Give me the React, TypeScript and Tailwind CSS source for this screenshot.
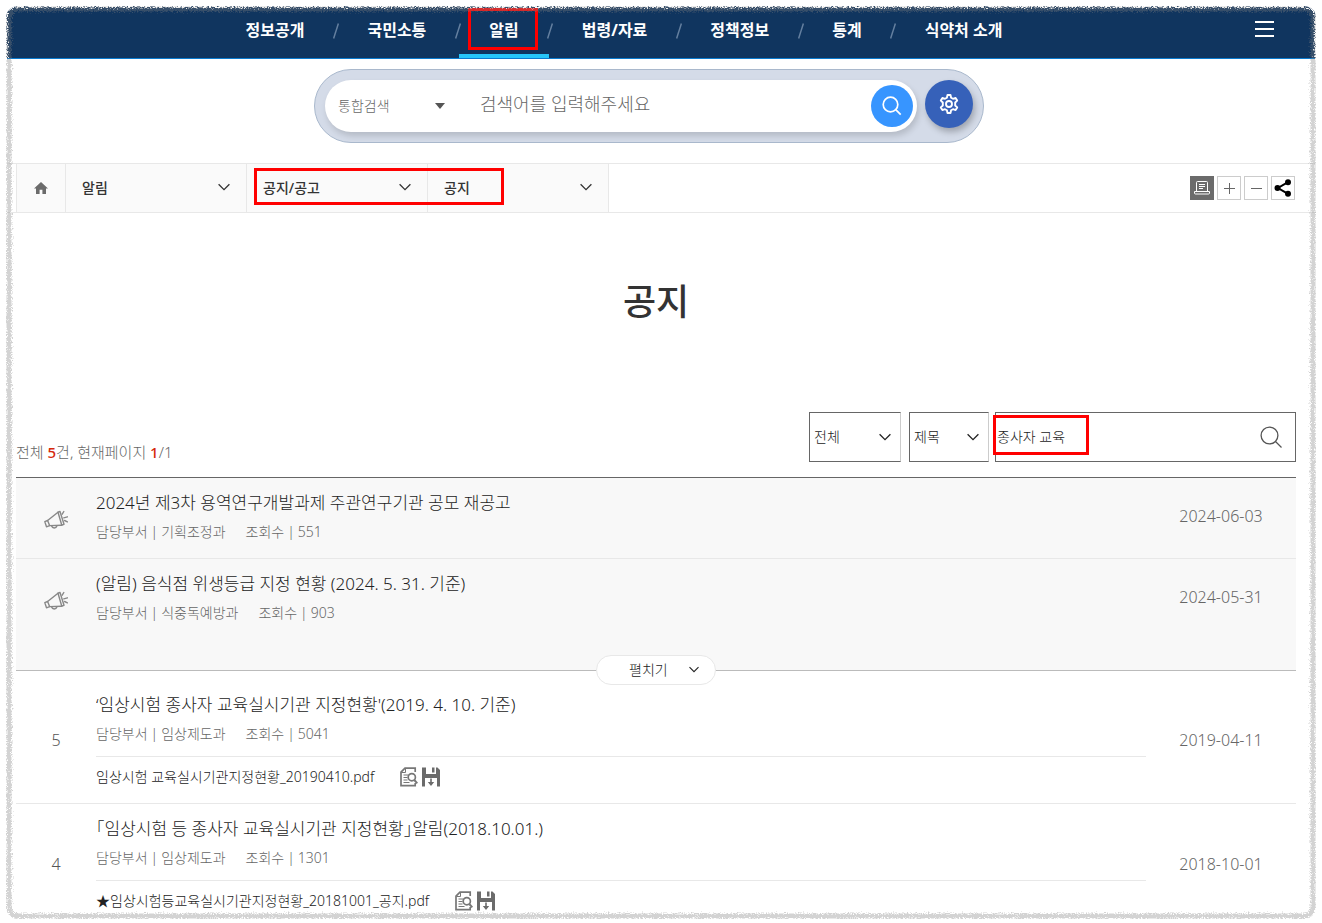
import { useState } from 'react';

interface INotice {
    no?: number;
    title: string;
    dept: string;
    views: number;
    date: string;
    file?: string;
}

const menus = ['정보공개', '국민소통', '알림', '법령/자료', '정책정보', '통계', '식약처 소개'];

const pinned: INotice[] = [
    { title: '2024년 제3차 용역연구개발과제 주관연구기관 공모 재공고', dept: '기획조정과', views: 551, date: '2024-06-03' },
    { title: '(알림) 음식점 위생등급 지정 현황 (2024. 5. 31. 기준)', dept: '식중독예방과', views: 903, date: '2024-05-31' },
];

const notices: INotice[] = [
    { no: 5, title: "‘임상시험 종사자 교육실시기관 지정현황'(2019. 4. 10. 기준)", dept: '임상제도과', views: 5041, date: '2019-04-11', file: '임상시험 교육실시기관지정현황_20190410.pdf' },
    { no: 4, title: '「임상시험 등 종사자 교육실시기관 지정현황」알림(2018.10.01.)', dept: '임상제도과', views: 1301, date: '2018-10-01', file: '★임상시험등교육실시기관지정현황_20181001_공지.pdf' },
];

const Chevron = ({ className }: { className: string }) => (
    <svg viewBox="0 0 12 8" className={className} fill="none" stroke="currentColor" strokeWidth="1.3" aria-hidden="true">
        <path d="M.6 1.2 6 6.6l5.400-5.400" />
    </svg>
);

const Megaphone = () => (
    <svg viewBox="0 0 24 20" className="w-6 h-5 text-[#888]" fill="none" stroke="currentColor" strokeWidth="1.4" strokeLinejoin="round" strokeLinecap="round" aria-hidden="true">
        <path d="M.8 11.600 3.600 10.500 5.600 15.600 2.500 16.800Z" />
        <path d="M3.600 10.500 14 2.200M5.600 15.600 17.800 15.200" />
        <path d="M14 2.200 16 1.500 20 14.300 17.800 15.200Z" />
        <path d="M7.500 15.800c1 3 4.500 3 5.500 0" />
        <path d="M18.200 4.200 19.800 1.500M19.800 7.800 23.400 6.800M20.600 10.500 23.400 11.800" />
    </svg>
);

const PreviewIcon = () => (
    <svg viewBox="0 0 18 20" className="w-[18px] h-5" fill="none" stroke="#777" strokeWidth="1.700" aria-hidden="true">
        <path d="M15.200 5V1.200H5L1 5.200V18.600H15.200V16" />
        <path d="M5.500 1.500V5.500H1.500" strokeWidth="1" />
        <path d="M3.500 8h5M3.500 10.500h4M3.500 13h4M3.500 15.500h6" strokeWidth="1.200" />
        <circle cx="11.800" cy="10.200" r="3.600" />
        <path d="M14.300 13 17.300 16.400" strokeWidth="2" />
    </svg>
);

const SaveIcon = () => (
    <svg viewBox="0 0 18 20" className="w-[18px] h-5" aria-hidden="true">
        <path fill="#6b6b6b" d="M0 .5H4V7H14V.5H15.500L18 3V19.500H15V11H3V19.500H0Z" />
        <path fill="#6b6b6b" d="M10 .5H12.500V5.500H10ZM8.200 11.500H9.800V15H12.200L9 19 5.800 15H8.200Z" />
    </svg>
);

const NoticeRow = ({ item }: { item: INotice }) => (
    <li className="flex items-stretch border-b border-[#e8e8e8] last:border-b-0">
        <div className="w-20 shrink-0 flex items-center justify-center text-[#555]">
            {item.no ? <span className="pb-1">{item.no}</span> : <span className="pt-1"><Megaphone /></span>}
        </div>
        <div className="grow min-w-0 pt-3">
            <a href="#" className="block text-[17px] leading-[26px] text-[#222] truncate [font-feature-settings:'halt']">{item.title}</a>
            <div className="mt-[5px] text-[14px] leading-[22px] text-[#666] flex gap-5">
                <p className="flex gap-[3px]"><span>담당부서</span><span>|</span><span>{item.dept}</span></p>
                <p className="flex gap-[3px]"><span>조회수</span><span>|</span><span>{item.views}</span></p>
            </div>
            {item.file ?
                <div className="mt-[11px] pt-2 pb-[14px] border-t border-[#e8e8e8] flex items-center">
                    <a href="#" className="text-[14px] leading-6 text-[#222]">{item.file}</a>
                    <button type="button" aria-label="미리보기" className="ml-[26px]"><PreviewIcon /></button>
                    <button type="button" aria-label="내려받기" className="ml-1"><SaveIcon /></button>
                </div>
                : <div className="h-[15px]"></div>
            }
        </div>
        <div className="w-[150px] pb-1 shrink-0 flex items-center justify-center text-[#666]">{item.date}</div>
    </li>
);

// rough grey outline drawn around the whole page
const RoughFrame = () => (
    <svg className="absolute inset-0 w-full h-full pointer-events-none" aria-hidden="true">
        <filter id="rough" x="-2%" y="-2%" width="104%" height="104%" colorInterpolationFilters="sRGB">
            <feTurbulence type="fractalNoise" baseFrequency="0.8" numOctaves="2" seed="4" />
            <feDisplacementMap in="SourceGraphic" scale="7" xChannelSelector="R" yChannelSelector="G" />
        </filter>
        <g filter="url(#rough)" fill="none">
            <rect x="0" y="0" rx="10" className="w-full h-full" stroke="#fff" strokeWidth="3" />
            <rect x="3" y="3" rx="9" className="w-[calc(100%-6px)] h-[calc(100%-6px)]" stroke="#808080" strokeOpacity="0.350" strokeWidth="5" />
        </g>
    </svg>
);

const App = () => {

    const [keyword, setKeyword] = useState('종사자 교육');
    const [query, setQuery] = useState('');

    return (
        <div className="h-screen bg-white p-[6px] pb-1 text-[16px] font-light text-[#333] font-['Noto_Sans','Noto_Sans_CJK_KR',sans-serif]">
            <div className="relative h-full overflow-hidden rounded-xl">
                <header className="bg-[#10355f] border-b border-[#0a7bd0] pl-[10px] pr-5 pt-[2px] flex">
                    <nav className="grow flex justify-center">
                        {menus.map((menu, i) => (
                            <div key={menu} className="flex items-center">
                                {i > 0 && <span className="w-[3px] flex justify-center pb-1" aria-hidden="true">
                                    <svg viewBox="0 0 6 16" className="w-[6px] h-4 shrink-0" stroke="#6580a0" strokeWidth="1.5"><path d="M5.400.5.600 15.500" /></svg>
                                </span>}
                                <a href="#" className={menu === '알림'
                                    ? 'relative h-[50px] px-[30px] pb-[2px] flex items-center border-b-4 border-[#26c6f9] text-white font-bold'
                                    : 'h-[50px] px-[30px] pb-[2px] flex items-center border-b-4 border-transparent text-white font-bold'}>
                                    {menu}
                                    {menu === '알림' && <span className="absolute left-[9px] top-0 w-[70px] h-[42px] border-3 border-[#f00]"></span>}
                                </a>
                            </div>
                        ))}
                    </nav>
                    <button type="button" aria-label="전체메뉴" className="w-16 shrink-0 pb-2 flex flex-col items-center justify-center gap-[5px]">
                        <span className="w-[19px] h-[2px] bg-white"></span>
                        <span className="w-[19px] h-[2px] bg-white"></span>
                        <span className="w-[19px] h-[2px] bg-white"></span>
                    </button>
                </header>

                <div className="pl-[10px] pr-[34px] pt-[10px] pb-5 flex justify-center">
                    <form className="w-full max-w-[670px] h-[74px] px-[10px] py-[10px] flex items-start gap-2 rounded-full border border-[#a9b8cc] bg-[#d4dbe8]" onSubmit={(e) => e.preventDefault()}>
                        <div className="grow h-[52px] pl-[13px] pr-1 flex items-center rounded-full bg-white shadow-[2px_4px_6px_rgba(0,0,0,0.15)]">
                            <div className="relative w-[110px] shrink-0">
                                <select aria-label="검색 범위" className="w-full pb-1 appearance-none bg-transparent text-[14px] text-[#666] outline-none">
                                    <option>통합검색</option>
                                </select>
                                <svg viewBox="0 0 10 6" className="absolute right-[3px] top-[10px] w-[10px] h-[6px] pointer-events-none" fill="#555" aria-hidden="true"><path d="M0 0h10L5 6z" /></svg>
                            </div>
                            <input aria-label="검색어" value={query} onChange={(e) => setQuery(e.target.value)} placeholder="검색어를 입력해주세요"
                                className="grow min-w-0 ml-8 pb-1 text-[18px] placeholder:text-[#666] outline-none" />
                            <button type="submit" aria-label="검색" className="size-[42px] shrink-0 rounded-full bg-[#3795ff] flex items-center justify-center">
                                <svg viewBox="0 0 20 20" className="size-5" fill="none" stroke="#fff" strokeWidth="1.700" aria-hidden="true"><circle cx="8.500" cy="8.500" r="7.300" /><path d="m13.700 13.700 5 5" /></svg>
                            </button>
                        </div>
                        <button type="button" aria-label="검색 설정" className="size-12 shrink-0 rounded-full bg-[#3661b9] shadow-[2px_4px_6px_rgba(0,0,0,0.25)] flex items-center justify-center">
                            <svg viewBox="0 0 20 20" className="size-5" fill="none" stroke="#fff" strokeWidth="1.900" strokeLinejoin="round" aria-hidden="true">
                                <path d="M8.500 1h3l.6 2.700 1.900 1.100 2.600-.9 1.600 2.700-2 1.900v3l2 1.900-1.600 2.700-2.600-.9-1.900 1.100-.6 2.700h-3l-.6-2.700L6 15.200l-2.600.9-1.600-2.700 2-1.900v-3l-2-1.900 1.600-2.700 2.600.9 1.900-1.100Z" />
                                <circle cx="10" cy="10" r="3" />
                            </svg>
                        </button>
                    </form>
                </div>

                <div className="pl-[10px] pr-[21px] border-y border-[#e8e8e8] flex items-center justify-between">
                    <div className="relative flex h-12 bg-[#fafafa] text-[14px] font-medium">
                        <a href="#" aria-label="홈" className="w-[50px] border-x border-[#e8e8e8] flex items-center justify-center">
                            <svg viewBox="0 0 14 12" className="w-[14px] h-3" fill="#6b6b6b" aria-hidden="true"><path d="M7 0 0 6.500h2V12h3.600V7.700h2.800V12H12V6.500h2Z" /></svg>
                        </a>
                        {['알림', '공지/공고', '공지'].map((name) => (
                            <button key={name} type="button" className="w-[181px] pl-4 pr-4 pb-[2px] border-r border-[#e8e8e8] flex items-center justify-between">
                                {name}
                                <Chevron className="w-3 h-2" />
                            </button>
                        ))}
                        <span className="absolute left-[238px] top-1 w-[250px] h-[37px] border-3 border-[#f00] pointer-events-none"></span>
                    </div>
                    <div className="flex gap-[3px]">
                        <button type="button" aria-label="인쇄" className="size-6 bg-[#6b6b6b] flex items-center justify-center">
                            <svg viewBox="0 0 16 14" className="w-4 h-[14px]" fill="none" stroke="#fff" strokeWidth="1" aria-hidden="true">
                                <path d="M2.500 10V1.500a1 1 0 0 1 1-1h9a1 1 0 0 1 1 1V10M.5 10.500h15v1.500q0 1-1 1h-13q-1 0-1-1ZM5 3.500h6M5 5.500h6M5 7.500h4" />
                            </svg>
                        </button>
                        <button type="button" aria-label="확대" className="size-6 border border-[#ccc] flex items-center justify-center">
                            <svg viewBox="0 0 12 12" className="size-3" stroke="#666" strokeWidth="1" aria-hidden="true"><path d="M1 6.500h11M6.500 1v11" /></svg>
                        </button>
                        <button type="button" aria-label="축소" className="size-6 border border-[#ccc] flex items-center justify-center">
                            <svg viewBox="0 0 12 12" className="size-3" stroke="#666" strokeWidth="1" aria-hidden="true"><path d="M1 6.500h11" /></svg>
                        </button>
                        <button type="button" aria-label="공유" className="size-6 border border-[#ccc] flex items-center justify-center">
                            <svg viewBox="0 0 18 18" className="size-[18px]" stroke="#000" strokeWidth="2" aria-hidden="true">
                                <path d="M14 3.200 4 9l10 5.800" fill="none" />
                                <circle cx="14" cy="3.200" r="2" /><circle cx="3.500" cy="9" r="2" /><circle cx="14" cy="14.800" r="2" />
                            </svg>
                        </button>
                    </div>
                </div>

                <main className="pl-[10px] pr-5">
                    <h1 className="pt-16 pb-[85px] text-center text-[36px] leading-[50px] font-medium">공지</h1>

                    <div className="flex items-end justify-between pb-[15px]">
                        <p className="text-[15px] leading-5 text-[#666]">
                            전체 <strong className="font-medium text-[#d5280a]">5</strong>건, 현재페이지 <strong className="font-medium text-[#d5280a]">1</strong>/1
                        </p>
                        <form className="flex h-[50px] text-[14px] text-[#222]" onSubmit={(e) => e.preventDefault()}>
                            <div className="relative mr-2">
                                <select aria-label="분류" className="w-[92px] h-full pl-1 pb-[2px] appearance-none border border-[#666] border-r-[#ccc] bg-white outline-none">
                                    <option>전체</option>
                                </select>
                                <Chevron className="absolute right-[10px] top-[21px] w-3 h-2 pointer-events-none" />
                            </div>
                            <div className="relative mr-[6px]">
                                <select aria-label="검색 항목" className="w-20 h-full pl-1 pb-[2px] appearance-none border border-[#666] border-r-[#ccc] bg-white outline-none">
                                    <option>제목</option>
                                </select>
                                <Chevron className="absolute right-[10px] top-[21px] w-3 h-2 pointer-events-none" />
                            </div>
                            <div className="relative w-[301px] border border-[#666] flex items-center">
                                <input aria-label="검색어 입력" value={keyword} onChange={(e) => setKeyword(e.target.value)} className="grow min-w-0 h-full pl-px pb-[2px] outline-none" />
                                <button type="submit" aria-label="목록 검색" className="w-12 h-full flex items-center justify-center">
                                    <svg viewBox="0 0 22 22" className="size-[22px]" fill="none" stroke="#555" strokeWidth="1.300" aria-hidden="true"><circle cx="9.500" cy="9.500" r="8.400" /><path d="m15.500 15.500 6 6" /></svg>
                                </button>
                                <span className="absolute -left-[3px] top-[2px] w-24 h-10 border-3 border-[#f00] pointer-events-none"></span>
                            </div>
                        </form>
                    </div>

                    <div className="relative border-t border-t-[#666] border-b border-b-[#bbb] bg-[#f8f8f8] pb-[31px]">
                        <ul>
                            {pinned.map((item) => <NoticeRow key={item.title} item={item} />)}
                        </ul>
                        <button type="button" className="absolute left-1/2 -bottom-[15px] -translate-x-1/2 w-[120px] h-[30px] pl-8 pr-4 pb-[2px] rounded-full border border-[#e8e8e8] bg-white flex items-center justify-between text-[14px] text-[#222]">
                            펼치기
                            <Chevron className="w-[10px] h-[7px]" />
                        </button>
                    </div>

                    <ul className="pt-[9px]">
                        {notices.map((item) => <NoticeRow key={item.title} item={item} />)}
                    </ul>
                </main>
                <RoughFrame />
            </div>
        </div>
    );
}

export default App;
